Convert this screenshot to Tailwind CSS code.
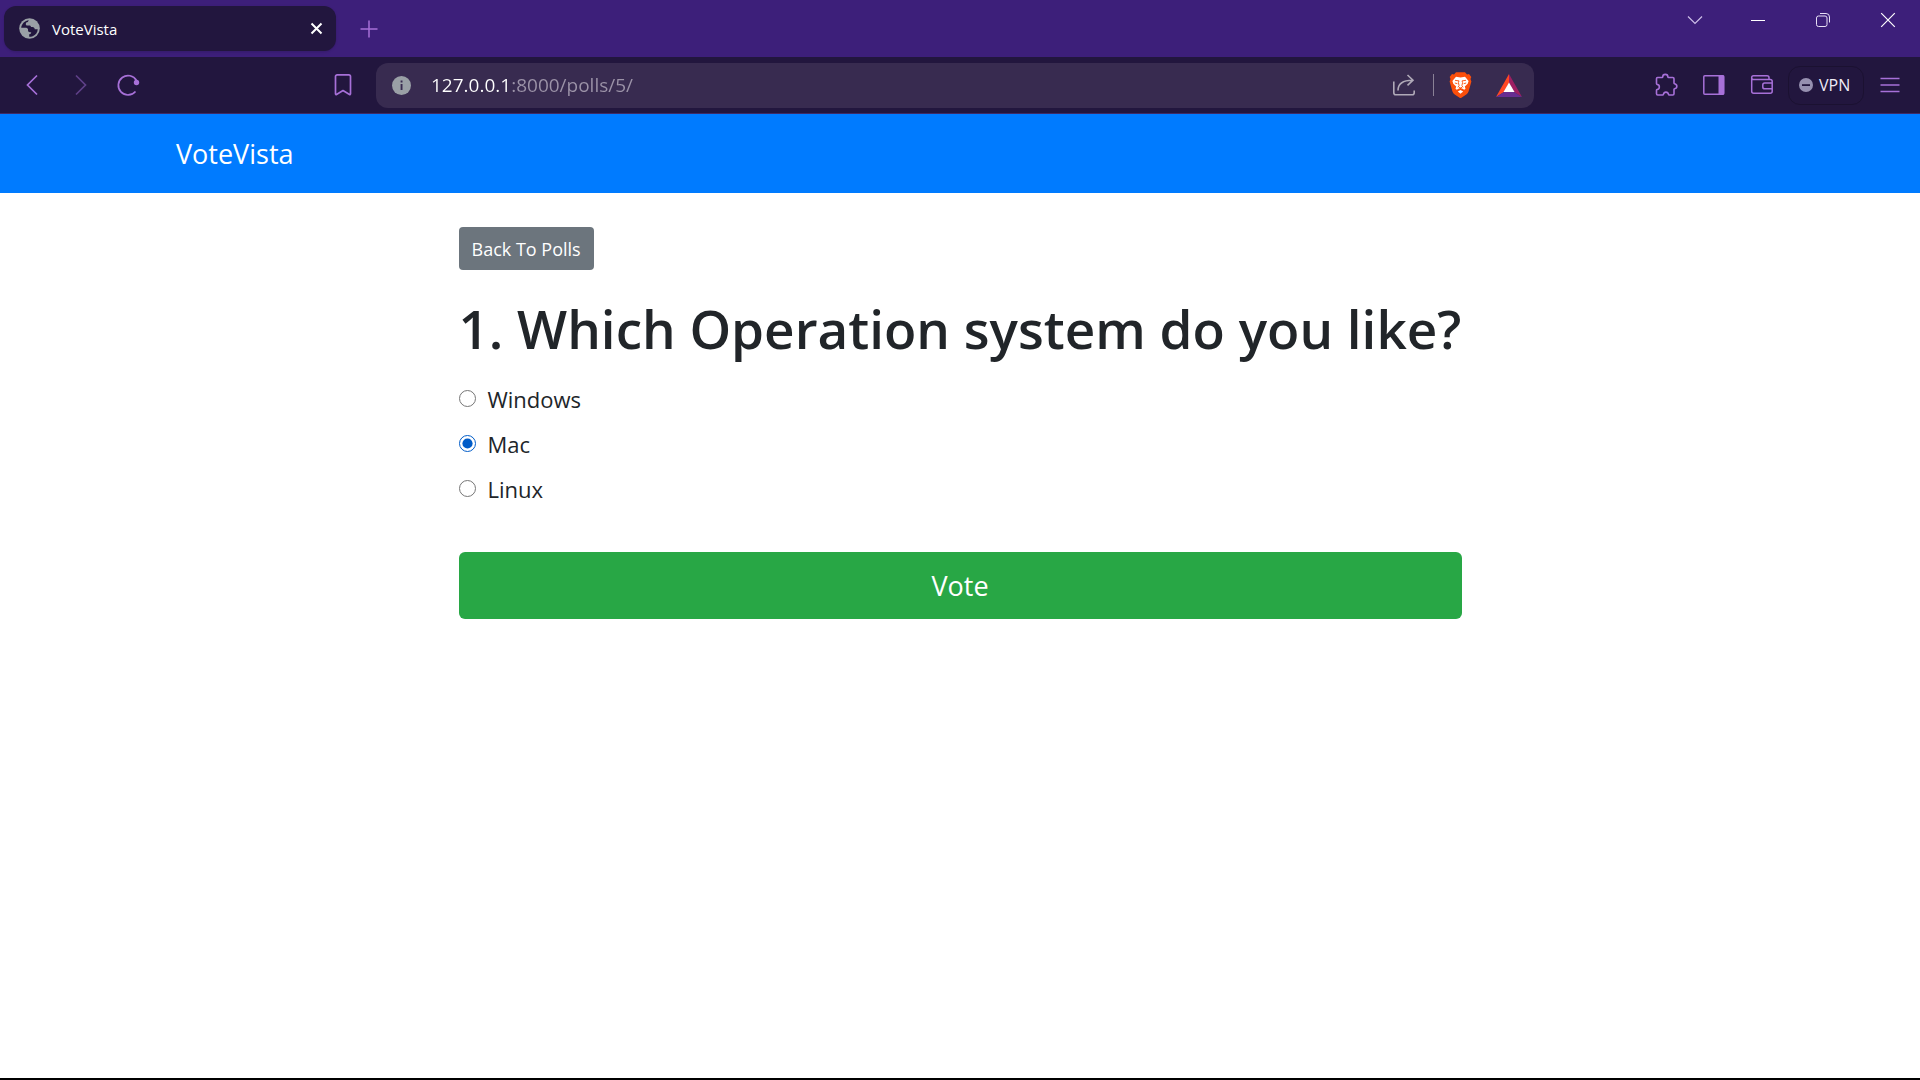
<!DOCTYPE html>
<html lang="en">
<head>
<meta charset="utf-8">
<meta name="viewport" content="width=device-width, initial-scale=1">
<title>VoteVista</title>
<script src="https://cdn.jsdelivr.net/npm/@tailwindcss/browser@4"></script>
</head>
<body class="flex min-h-screen flex-col bg-white font-['Open_Sans','Noto_Sans',sans-serif] text-[#212529]">

<!-- Tab strip -->
<div class="flex h-[57px] items-start justify-between bg-[#3d1f7a] pl-1">
  <div class="flex items-center pt-[6px]">
    <div class="flex h-[45px] w-[332px] items-center rounded-xl bg-[#22163e] pr-[10px] pl-[15px] text-white shadow">
      <svg class="size-[21px] shrink-0" viewBox="0 0 21 21" aria-hidden="true">
        <circle cx="10.5" cy="10.5" r="10.3" fill="#9aa0a6"/>
        <path d="M2.200 9.800C2.600 5.600 6 2.400 9.800 2.200L8.800 4c-1.300 0-2 .8-2 2.200 0 .9.700 1.400 1.700 1.400h2.300c.8 0 1 .8 1.200 1.500h1.500c1.400 0 2.200 1 2.200 2.200h3c0 3.200-2 5.700-5 6.900-1.200.4-2.200.6-3.500.6v-2.600c1.300 0 2-.8 2-2h-1.200c-1.300 0-2-.8-2-2V11c-.6-.9-1.400-1.200-2.500-1.200z" fill="#22163e"/>
      </svg>
      <span class="ml-3 flex-1 text-[15px] leading-5">VoteVista</span>
      <button type="button" aria-label="Close tab" class="flex size-5 items-center justify-center">
        <svg class="size-[13px]" viewBox="0 0 13 13" fill="none" stroke="#fff" stroke-width="2"><path d="M1.500 1.500l10 10M11.500 1.500l-10 10"/></svg>
      </button>
    </div>
    <button type="button" aria-label="New tab" class="ml-6 flex size-[18px] items-center justify-center">
      <svg class="size-[18px]" viewBox="0 0 18 18" fill="none" stroke="#a770d8" stroke-width="1.500"><path d="M9 .5v17M.5 9h17"/></svg>
    </button>
  </div>
  <div class="flex h-10 items-center text-white">
    <button type="button" aria-label="Search tabs" class="flex w-[63px] justify-center"><svg class="size-4" viewBox="0 0 16 16" fill="none" stroke="#cdbfe8" stroke-width="1.200"><path d="M1 4.500l7 7 7-7"/></svg></button>
    <button type="button" aria-label="Minimize" class="flex w-16 justify-center"><svg class="size-4" viewBox="0 0 16 16" fill="none" stroke="#fff" stroke-width="1"><path d="M1 8.500h14"/></svg></button>
    <button type="button" aria-label="Restore" class="flex w-[66px] justify-center"><svg class="size-4" viewBox="0 0 16 16" fill="none" stroke="#e8e0f6" stroke-width="1"><rect x="1.500" y="4" width="10.500" height="10.500" rx="2"/><path d="M5 1.500h6a3.500 3.500 0 0 1 3.500 3.500v5.500"/></svg></button>
    <button type="button" aria-label="Close window" class="flex w-16 justify-center"><svg class="size-4" viewBox="0 0 16 16" fill="none" stroke="#fff" stroke-width="1.200"><path d="M1.200 1.200l13.600 13.600M14.800 1.200L1.200 14.800"/></svg></button>
  </div>
</div>

<!-- Toolbar -->
<div class="flex h-[57px] items-center border-b border-[#3d2a66] bg-[#22163e] pr-5 pl-[21px]">
  <button type="button" aria-label="Back" class="flex size-6 items-center justify-center"><svg class="size-6" viewBox="0 0 24 24" fill="none" stroke="#a770d8" stroke-width="1.700"><path d="M16 2.500L6.500 12l9.500 9.500"/></svg></button>
  <button type="button" aria-label="Forward" class="ml-6 flex size-6 items-center justify-center"><svg class="size-6" viewBox="0 0 24 24" fill="none" stroke="#5f4088" stroke-width="1.700"><path d="M7 2.500l9.500 9.500L7 21.500"/></svg></button>
  <button type="button" aria-label="Reload" class="ml-[23px] flex size-6 items-center justify-center"><svg class="size-6" viewBox="0 0 24 24" fill="none" stroke="#a770d8" stroke-width="1.700"><path d="M19.500 18.500A9.700 9.700 0 1 1 20.500 7.500"/><circle cx="20.500" cy="9.500" r="2.700" fill="#a770d8" stroke="none"/></svg></button>
  <button type="button" aria-label="Bookmark this page" class="ml-[191px] flex size-6 items-center justify-center"><svg class="size-6" viewBox="0 0 24 24" fill="none" stroke="#a770d8" stroke-width="1.700" stroke-linejoin="round"><path d="M4.500 3.500a1.700 1.700 0 0 1 1.700-1.700h11.600a1.700 1.700 0 0 1 1.700 1.700v17.300c0 .7-.5.900-1 .6L12 17.500l-6.500 3.900c-.5.300-1 .1-1-.6z"/></svg></button>

  <div class="ml-[21px] flex h-[45px] max-w-[1158px] flex-1 items-center rounded-xl bg-[#382b50] pr-3 pl-4">
    <svg class="size-[19px] shrink-0" viewBox="0 0 19 19" aria-hidden="true"><circle cx="9.500" cy="9.500" r="9.500" fill="#9aa0a6"/><path d="M8.600 4.500h1.900v1.900H8.600zM8.600 8h1.900v6H8.600z" fill="#382b50"/></svg>
    <input type="text" aria-label="Address" value="127.0.0.1:8000/polls/5/" class="ml-5 min-w-0 flex-1 bg-[linear-gradient(90deg,#fff_81px,#9c93a8_81px)] bg-clip-text text-[19px] leading-6 text-transparent outline-none">
    <button type="button" aria-label="Share" class="flex size-6 items-center justify-center"><svg class="size-6" viewBox="0 0 24 24" fill="none" stroke="#b0aab8" stroke-width="1.600"><path d="M1.800 8.500v11.300a2 2 0 0 0 2 2h16.400a2 2 0 0 0 2-2v-2.300M6 17.500c0-6.500 4.500-10.300 14.500-10.300M15.500 2l5.500 5.200-5.500 5.200"/></svg></button>
    <span class="mr-[14px] ml-[17px] h-[22px] w-px bg-[#8a8196]"></span>
    <button type="button" aria-label="Brave Shields" class="flex h-[26px] w-6 items-center justify-center"><svg class="h-[26px] w-[23px]" viewBox="0 0 23 26"><path d="M7 .2h9l2 2.300 2-.4 2.300 2.800-.8 2 .9 2.600-2.700 9.600c-.4 1.500-1.200 2.500-2.400 3.300l-4.900 3.300c-.6.400-1.200.4-1.800 0l-4.900-3.300c-1.200-.8-2-1.800-2.400-3.300L.6 9.500l.9-2.600-.8-2L3 2.100l2 .4z" fill="#fb4f0b"/><path d="M7 4.800l4.500.8 4.500-.8 3.600 4.100-.9 2.800-2.900 2.800.7 2.200-1.300 1-2.100-1.100-1.600-.6-1.600.6-2.100 1.100-1.300-1 .7-2.200-2.900-2.800-.9-2.800z" fill="#fff"/><path d="M11.500 18l2.700 1.500-2.700 2.200-2.700-2.200z" fill="#fff"/><path d="M6 8.300l4 .6-.6 1.700.7 3.100-1.300 1.600M17 8.300l-4 .6.600 1.700-.7 3.100 1.300 1.600M5.800 11l2.600.7M17.200 11l-2.600.7M9.800 15.200l1.700.7 1.700-.7M11.500 15.900v1.600" fill="none" stroke="#fb4f0b" stroke-width=".9"/></svg></button>
    <button type="button" aria-label="Brave Rewards" class="ml-6 flex size-[26px] items-center justify-center"><svg class="h-[23px] w-[26px]" viewBox="0 0 26 23"><path d="M13 0v9L8 18l-8 5z" fill="#ff4724"/><path d="M13 0l13 23-8-5-5-9z" fill="#9e1f63"/><path d="M0 23l8-5h10l8 5z" fill="#662d91"/><path d="M13 8.500l5.500 9.500h-11z" fill="#fff"/></svg></button>
  </div>

  <div class="ml-auto flex items-center">
    <button type="button" aria-label="Extensions" class="flex size-6 items-center justify-center"><svg class="size-6" viewBox="0 0 24 24" fill="none" stroke="#a770d8" stroke-width="1.600" stroke-linejoin="round"><path d="M3.500 4.500H8c.4 0 .7-.2.700-.6 0-3.400 5.200-3.400 5.200 0 0 .4.300.6.700.6h4.200c.7 0 1.200.5 1.200 1.200v4.200c0 .4.200.7.600.8 3 .7 3 4.400 0 5.100-.4.100-.6.400-.6.800v4.200c0 .7-.5 1.200-1.200 1.200h-3.500c-.4 0-.7-.2-.8-.6-.6-3-4.500-3-5.100 0-.1.400-.4.600-.8.600H3.700c-.7 0-1.200-.5-1.200-1.200v-3.500c0-.4.200-.7.600-.8 3-.6 3-4.500 0-5.100-.4-.1-.6-.4-.6-.8V5.700c0-.7.400-1.200 1-1.200z"/></svg></button>
    <button type="button" aria-label="Side panel" class="ml-6 flex size-6 items-center justify-center"><svg class="size-6" viewBox="0 0 24 24" fill="none" stroke="#a770d8" stroke-width="1.500"><rect x="1.800" y="2.800" width="20" height="18.500" rx="1"/><path d="M16.500 2.500h5.500v19h-5.500z" fill="#a770d8" stroke="none"/></svg></button>
    <button type="button" aria-label="Wallet" class="ml-6 flex size-6 items-center justify-center"><svg class="size-6" viewBox="0 0 24 24" fill="none" stroke="#a770d8" stroke-width="1.500" stroke-linejoin="round"><path d="M19 6.500V4.800a2 2 0 0 0-2-2H3.500a1.800 1.800 0 0 0-1.800 1.800v13.600a2 2 0 0 0 2 2h16.500a2 2 0 0 0 2-2V8.500a2 2 0 0 0-2-2H3.500c-1 0-1.800-.8-1.800-1.800M22.200 10h-7.500a1.900 1.900 0 0 0-1.900 1.900v2a1.900 1.900 0 0 0 1.900 1.900h7.500z"/></svg></button>
    <button type="button" class="ml-[14px] flex h-[39px] w-[76px] items-center rounded-xl border border-[#1b1131] pl-[10px] text-base leading-5 text-[#f0ecf6]">
      <svg class="mr-[6px] size-[14px] shrink-0" viewBox="0 0 14 14" aria-hidden="true"><circle cx="7" cy="7" r="7" fill="#9690b0"/><path d="M3 6.200h8v1.800H3z" fill="#22163e"/></svg>VPN</button>
    <button type="button" aria-label="Menu" class="ml-4 flex w-5 items-center justify-center"><svg class="h-4 w-5" viewBox="0 0 20 16" fill="none" stroke="#a770d8" stroke-width="1.400"><path d="M.5 1.500h19M.5 8h19M.5 14.500h19"/></svg></button>
  </div>
</div>

<!-- Site header -->
<nav class="flex h-[79px] items-center bg-[#007bff] px-44">
  <a href="#" class="text-[27px] leading-9 text-white">VoteVista</a>
</nav>

<!-- Poll -->
<main class="mx-auto w-full max-w-[1003px] flex-1 pt-[34px]">
  <a href="#" class="inline-flex h-[43px] items-center rounded bg-[#6c757d] px-[13px] text-[18px] leading-6 text-white">Back To Polls</a>
  <h1 class="mt-6 text-[53px] leading-[70px] font-semibold whitespace-nowrap">1. Which Operation system do you like?</h1>
  <form class="mt-3">
    <div class="flex h-[45px] items-center gap-3">
      <input type="radio" name="choice" id="choice1" class="size-[17px] accent-[#005cc8]">
      <label for="choice1" class="text-[22px] leading-8">Windows</label>
    </div>
    <div class="flex h-[45px] items-center gap-3">
      <input type="radio" name="choice" id="choice2" checked class="size-[17px] accent-[#005cc8]">
      <label for="choice2" class="text-[22px] leading-8">Mac</label>
    </div>
    <div class="flex h-[45px] items-center gap-3">
      <input type="radio" name="choice" id="choice3" class="size-[17px] accent-[#005cc8]">
      <label for="choice3" class="text-[22px] leading-8">Linux</label>
    </div>
    <button type="submit" class="mt-[41px] flex h-[67px] w-full items-center justify-center rounded-md bg-[#28a745] text-[27px] leading-9 text-white">Vote</button>
  </form>
</main>
<div class="h-[2px] bg-black"></div>
</body>
</html>
